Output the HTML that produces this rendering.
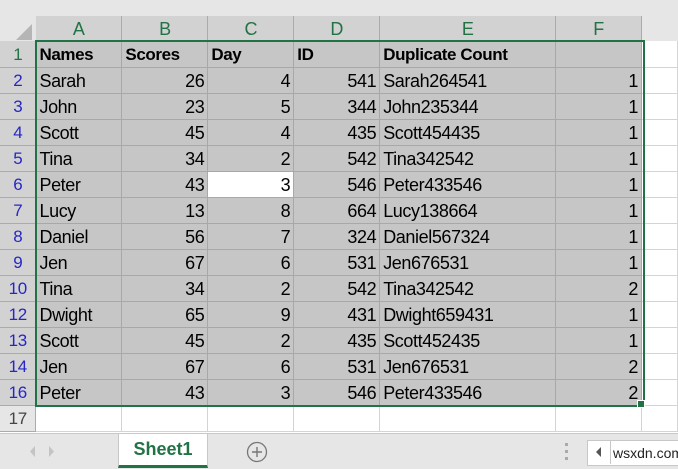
<!DOCTYPE html><html><head><style>
body{margin:0;width:678px;height:468px;overflow:hidden;background:#fff;font-family:"Liberation Sans",Arial,sans-serif;position:relative}
.top{position:absolute;left:0;top:0;width:678px;height:16px;background:#e6e6e6}
table{position:absolute;left:0;top:16px;border-collapse:collapse;table-layout:fixed}
td{height:26px;padding:2px 3px 0;border-right:1px solid #d4d4d4;border-bottom:1px solid #d4d4d4;font-size:18px;color:#000;white-space:nowrap;overflow:hidden;box-sizing:border-box;letter-spacing:-0.4px}
tr.h td{height:25px;background:#d2d2d2;color:#217346;text-align:center;font-size:18px;border-color:#ababab;border-bottom:1px solid #9a9a9a}
tr.h td.x{background:#e6e6e6;border:none}
td.r{background:#d2d2d2;color:#2626c8;text-align:center;padding:2px 0 0;border-color:#ababab;font-size:17px}
tr.s td.c{background:#c6c6c6;border-color:#a8a8a8}
td.n{text-align:right}
td.w{background:#fff!important}
tr.b td.c{font-weight:bold;font-size:17px}
tr.e td.r{background:#e6e6e6;color:#444}
.sel{position:absolute;left:35px;top:40px;width:606px;height:363px;border:2px solid #217346}
.hand{position:absolute;left:637px;top:400px;width:6px;height:6px;background:#217346;border:1px solid #fff}
.tabs{position:absolute;left:0;top:433px;width:678px;height:35px;background:#e6e6e6;border-top:1px solid #c8c8c8}
.tab{position:absolute;left:118px;top:0;width:88px;height:31px;background:#fff;border:1px solid #c8c8c8;border-top:none;border-bottom:3px solid #217346;color:#217346;font-weight:bold;font-size:18px;text-align:center;line-height:31px}
</style></head><body>
<div class="top"></div>
<table>
<colgroup><col style="width:36px"><col style="width:86px"><col style="width:86px"><col style="width:86px"><col style="width:86px"><col style="width:176px"><col style="width:86px"><col style="width:36px"></colgroup>
<tr class="h"><td style="background:#e6e6e6;border:none;position:relative"><svg width="30" height="25" style="position:absolute;left:4px;top:2px"><polygon points="28,6 28,22 12,22" fill="#b5b5b5"/></svg></td><td>A</td><td>B</td><td>C</td><td>D</td><td>E</td><td>F</td><td class="x"></td></tr>
<tr class="s b"><td class="r" style="color:#217346">1</td><td class="c">Names</td><td class="c">Scores</td><td class="c">Day</td><td class="c">ID</td><td class="c">Duplicate Count</td><td class="c"></td><td></td></tr>
<tr class="s"><td class="r">2</td><td class="c">Sarah</td><td class="c n">26</td><td class="c n">4</td><td class="c n">541</td><td class="c">Sarah264541</td><td class="c n">1</td><td></td></tr>
<tr class="s"><td class="r">3</td><td class="c">John</td><td class="c n">23</td><td class="c n">5</td><td class="c n">344</td><td class="c">John235344</td><td class="c n">1</td><td></td></tr>
<tr class="s"><td class="r">4</td><td class="c">Scott</td><td class="c n">45</td><td class="c n">4</td><td class="c n">435</td><td class="c">Scott454435</td><td class="c n">1</td><td></td></tr>
<tr class="s"><td class="r">5</td><td class="c">Tina</td><td class="c n">34</td><td class="c n">2</td><td class="c n">542</td><td class="c">Tina342542</td><td class="c n">1</td><td></td></tr>
<tr class="s"><td class="r">6</td><td class="c">Peter</td><td class="c n">43</td><td class="c n w">3</td><td class="c n">546</td><td class="c">Peter433546</td><td class="c n">1</td><td></td></tr>
<tr class="s"><td class="r">7</td><td class="c">Lucy</td><td class="c n">13</td><td class="c n">8</td><td class="c n">664</td><td class="c">Lucy138664</td><td class="c n">1</td><td></td></tr>
<tr class="s"><td class="r">8</td><td class="c">Daniel</td><td class="c n">56</td><td class="c n">7</td><td class="c n">324</td><td class="c">Daniel567324</td><td class="c n">1</td><td></td></tr>
<tr class="s"><td class="r">9</td><td class="c">Jen</td><td class="c n">67</td><td class="c n">6</td><td class="c n">531</td><td class="c">Jen676531</td><td class="c n">1</td><td></td></tr>
<tr class="s"><td class="r">10</td><td class="c">Tina</td><td class="c n">34</td><td class="c n">2</td><td class="c n">542</td><td class="c">Tina342542</td><td class="c n">2</td><td></td></tr>
<tr class="s"><td class="r">12</td><td class="c">Dwight</td><td class="c n">65</td><td class="c n">9</td><td class="c n">431</td><td class="c">Dwight659431</td><td class="c n">1</td><td></td></tr>
<tr class="s"><td class="r">13</td><td class="c">Scott</td><td class="c n">45</td><td class="c n">2</td><td class="c n">435</td><td class="c">Scott452435</td><td class="c n">1</td><td></td></tr>
<tr class="s"><td class="r">14</td><td class="c">Jen</td><td class="c n">67</td><td class="c n">6</td><td class="c n">531</td><td class="c">Jen676531</td><td class="c n">2</td><td></td></tr>
<tr class="s"><td class="r">16</td><td class="c">Peter</td><td class="c n">43</td><td class="c n">3</td><td class="c n">546</td><td class="c">Peter433546</td><td class="c n">2</td><td></td></tr>
<tr class="e"><td class="r">17</td><td></td><td></td><td></td><td></td><td></td><td></td><td></td></tr>
</table>
<div class="sel"></div><div class="hand"></div>
<div class="tabs">
<svg width="110" height="35" style="position:absolute;left:0;top:0"><polygon points="35,12 35,23 30,17.5" fill="#c4c4c4"/><polygon points="49,12 49,23 54,17.5" fill="#c4c4c4"/></svg>
<div class="tab">Sheet1</div>
<svg width="24" height="24" style="position:absolute;left:246px;top:6px"><circle cx="11" cy="12" r="9.5" fill="none" stroke="#777" stroke-width="1.3"/><path d="M6 12H16M11 7V17" stroke="#777" stroke-width="1.4"/></svg>
<svg width="6" height="20" style="position:absolute;left:564px;top:8px"><rect x="1" y="1" width="3" height="3" fill="#aaa"/><rect x="1" y="8" width="3" height="3" fill="#aaa"/><rect x="1" y="15" width="3" height="3" fill="#aaa"/></svg>
<div style="position:absolute;left:587px;top:6px;width:91px;height:24px;background:#fff;border:1px solid #c8c8c8"></div>
<div style="position:absolute;left:610px;top:6px;width:1px;height:24px;background:#c8c8c8"></div>
<svg width="10" height="14" style="position:absolute;left:595px;top:11px"><polygon points="6,2 6,12 1,7" fill="#555"/></svg>
<div style="position:absolute;left:613px;top:11px;font-size:14px;color:#222">wsxdn.com</div>
</div>
</body></html>
